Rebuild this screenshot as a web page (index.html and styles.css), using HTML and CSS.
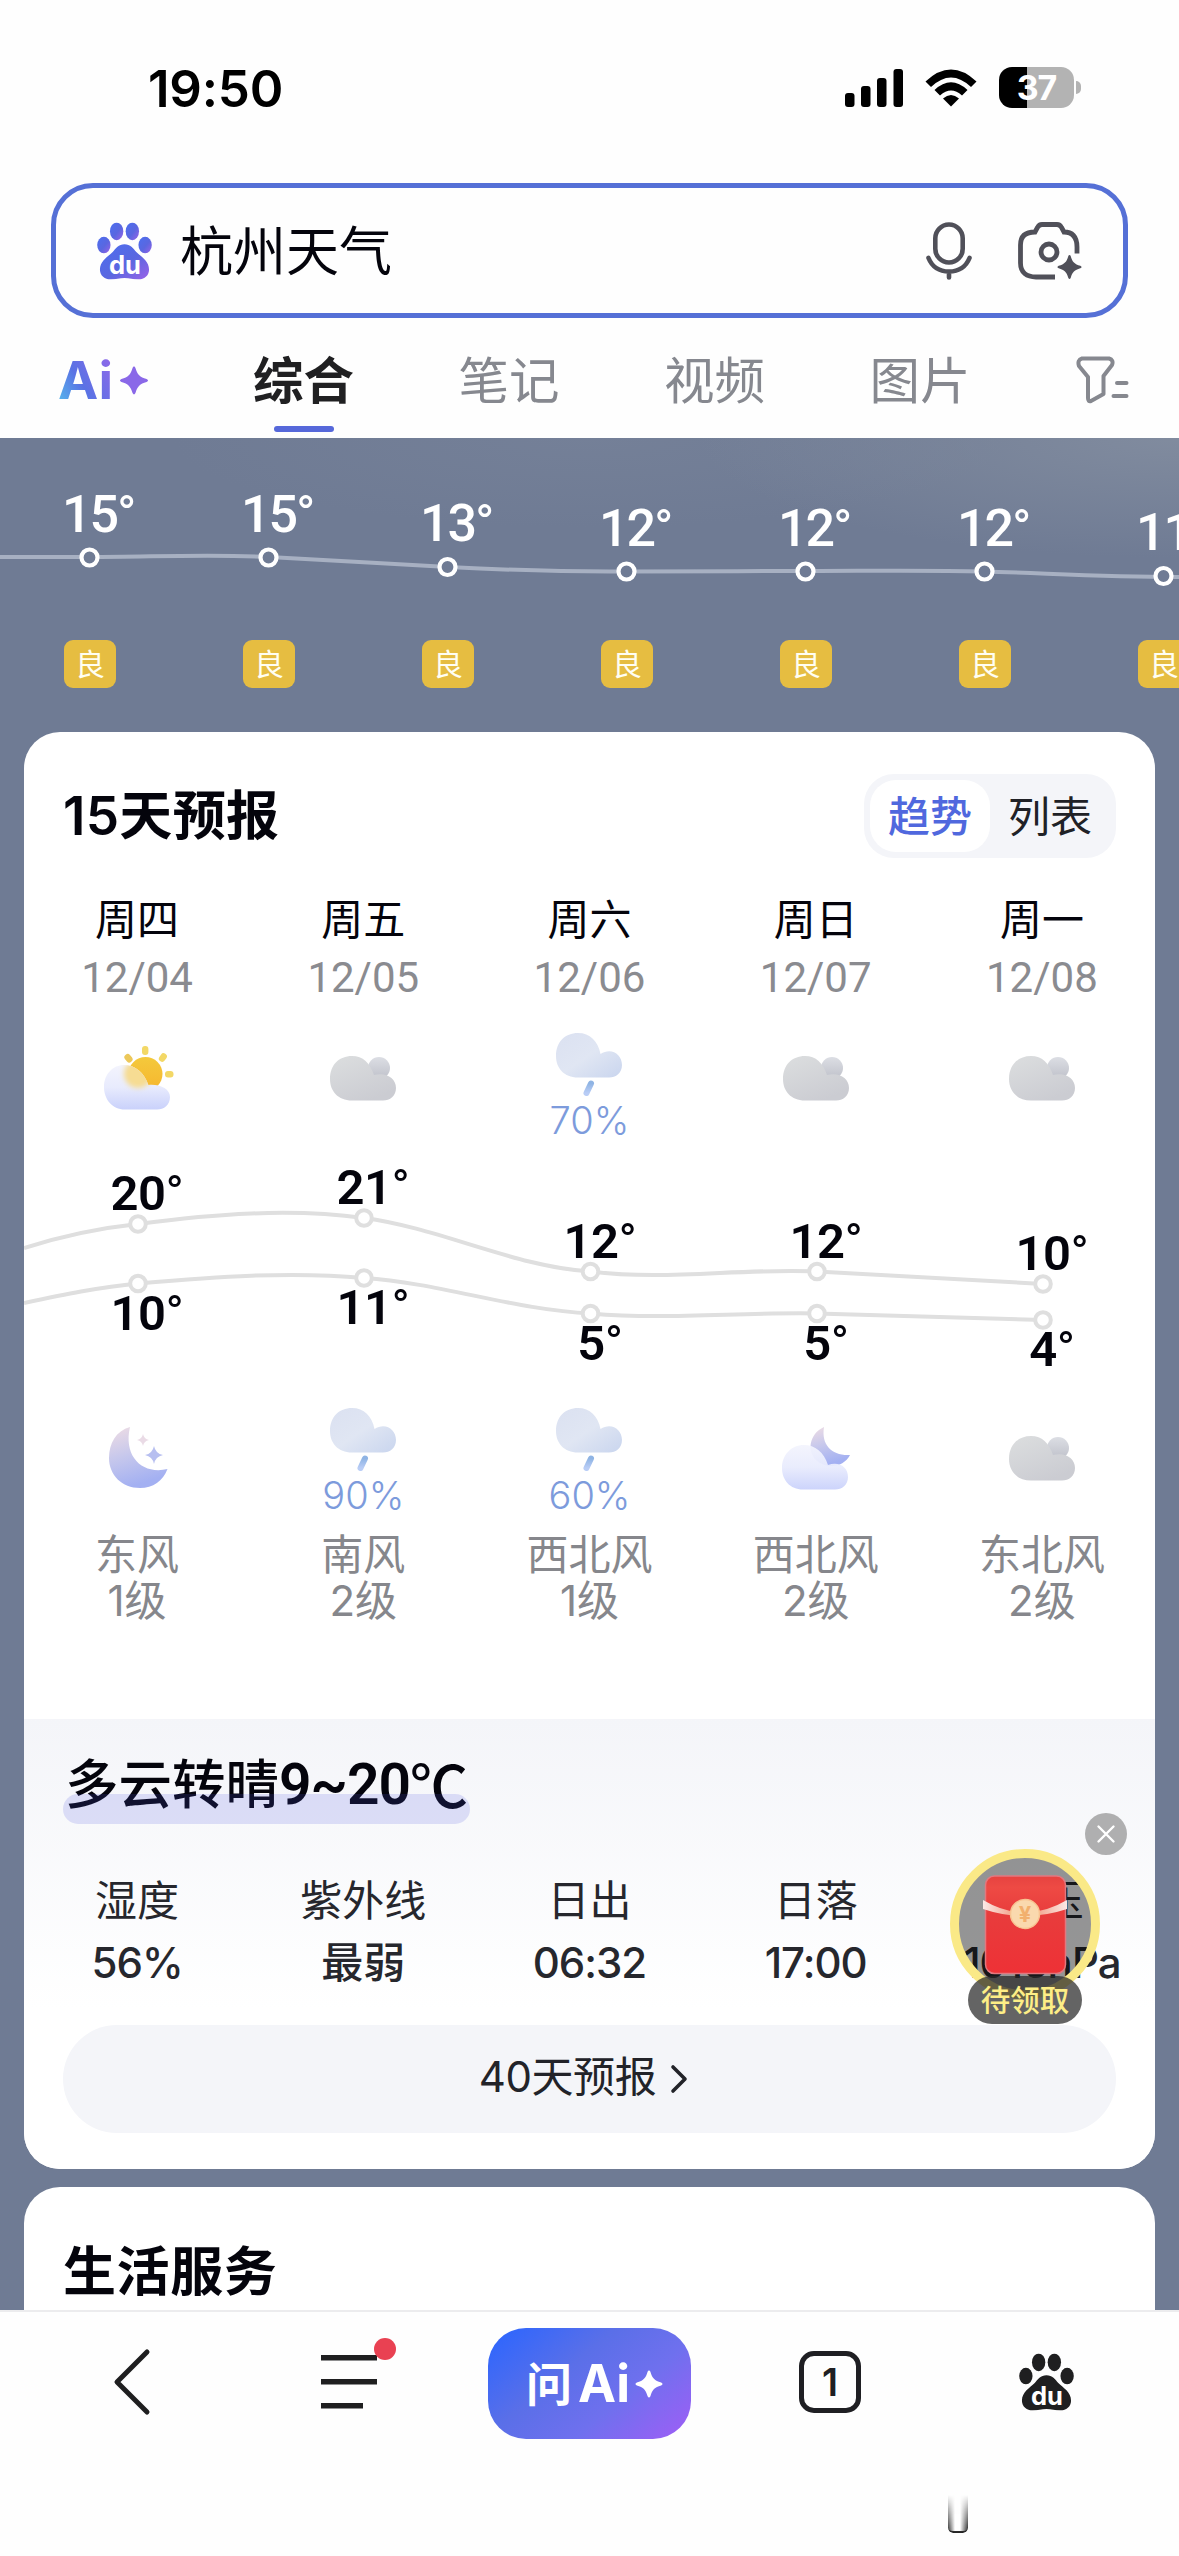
FILE: index.html
```html
<!DOCTYPE html>
<html lang="zh-CN">
<head>
<meta charset="utf-8">
<title>杭州天气</title>
<link rel="stylesheet" href="styles.css">
</head>
<body>
<svg class="defs" width="0" height="0" aria-hidden="true">
  <defs>
    <linearGradient id="pawGrad" x1="0" y1="0" x2="1" y2="1"><stop offset="0" stop-color="#4c6ff0"/><stop offset=".55" stop-color="#5a67e0"/><stop offset="1" stop-color="#9a62e8"/></linearGradient>
    <linearGradient id="greyCloud" x1="0" y1="0" x2=".6" y2="1"><stop offset="0" stop-color="#dcdedf"/><stop offset="1" stop-color="#cbccd2"/></linearGradient>
    <linearGradient id="greyBack" x1="0" y1="0" x2="0" y2="1"><stop offset="0" stop-color="#dcdee4"/><stop offset="1" stop-color="#bfc1ca"/></linearGradient>
    <linearGradient id="rainCloud" x1="0" y1="0" x2="1" y2="1"><stop offset="0" stop-color="#dbe1f1"/><stop offset=".5" stop-color="#e0e6f3"/><stop offset="1" stop-color="#c9d5ee"/></linearGradient>
    <linearGradient id="drop" x1="0" y1="0" x2="0" y2="1"><stop offset="0" stop-color="#8fb4e4"/><stop offset="1" stop-color="#b9cdf6"/></linearGradient>
    <linearGradient id="whiteCloud" x1="0" y1="0" x2="0" y2="1"><stop offset="0" stop-color="#f3f4fd"/><stop offset=".5" stop-color="#e8ebfd"/><stop offset="1" stop-color="#c9d1fb"/></linearGradient>
    <linearGradient id="sun" x1="0" y1="0" x2="0" y2="1"><stop offset="0" stop-color="#f4c93c"/><stop offset="1" stop-color="#f6b62f"/></linearGradient>
    <linearGradient id="moon" x1="0" y1="0" x2=".3" y2="1"><stop offset="0" stop-color="#efdde4"/><stop offset=".5" stop-color="#c7c8ec"/><stop offset="1" stop-color="#a3b0f2"/></linearGradient>
    <filter id="soft" x="-40%" y="-40%" width="180%" height="180%"><feGaussianBlur stdDeviation="2.5"/></filter>
    <clipPath id="cloudClip"><path d="M20 0C31 0 40 7 44.500 20C56 19 66 24 66 32C66 40 60 44.500 53 44.500H21C8 44.500 0 34 0 22C0 9 9 0 20 0Z"/></clipPath>

    <symbol id="paw" viewBox="0 0 56 58">
      <ellipse cx="20" cy="9" rx="6.8" ry="9"/><ellipse cx="36" cy="9" rx="6.8" ry="9"/>
      <ellipse cx="7" cy="23" rx="6.8" ry="8.4"/><ellipse cx="49" cy="23" rx="6.8" ry="8.4"/>
      <path d="M28 22C34 22 37 26 40 30C45 35 53 39 53 48C53 54 48 58 42 58C37 58 33 56.500 28 56.500S19 58 14 58C8 58 3 54 3 48C3 39 11 35 16 30C19 26 22 22 28 22Z"/>
    </symbol>
    <symbol id="overcast" viewBox="0 0 66 45">
      <circle cx="49" cy="12" r="11" fill="url(#greyBack)"/>
      <path d="M22 0C33 0 40 7 44 19C56 16 66 22 66 32C66 40 60 44.500 53 44.500H22C8 44.500 0 35 0 23C0 9 9 0 22 0Z" fill="url(#greyCloud)"/>
    </symbol>
    <symbol id="rain" viewBox="0 0 66 64">
      <path d="M22 0C34 0 42 8 44.500 21C55 14 66 21 66 32C66 40 60 44.500 53 44.500H22C8 44.500 0 35 0 23C0 9 9 0 22 0Z" fill="url(#rainCloud)"/>
      <path d="M35 50.500L30.500 60" stroke="url(#drop)" stroke-width="6" stroke-linecap="round"/>
    </symbol>
    <symbol id="partly" viewBox="0 0 70 64">
      <g fill="#f3d866">
        <rect x="38" y="0" width="6.400" height="9" rx="3"/>
        <rect x="21" y="8" width="6.400" height="9" rx="3" transform="rotate(-40 24 12)" fill="#ecc85a"/>
        <rect x="56" y="7" width="6.400" height="9" rx="3" transform="rotate(35 59 11)"/>
        <rect x="61" y="25" width="8.500" height="6.400" rx="3"/>
      </g>
      <circle cx="41.500" cy="28" r="17" fill="url(#sun)"/>
      <g transform="translate(0 19)">
        <path d="M20 0C31 0 40 7 44.500 20C56 19 66 24 66 32C66 40 60 44.500 53 44.500H21C8 44.500 0 34 0 22C0 9 9 0 20 0Z" fill="url(#whiteCloud)"/>
        <g clip-path="url(#cloudClip)"><circle cx="34" cy="9" r="14" fill="#f6dc93" filter="url(#soft)"/></g>
      </g>
    </symbol>
    <symbol id="crescent" viewBox="0 0 60 62">
      <path d="M21 0C7 4 0 16 0 31C0 48 13 61 31 61C44 61 54 54 58.500 42C34 48 14 30 21 0Z" fill="url(#moon)"/>
      <path d="M34 7Q35 12 40 13Q35 14 34 19Q33 14 28 13Q33 12 34 7Z" fill="#eadbe6"/>
      <path d="M45 19Q46.500 26.500 54 28Q46.500 29.500 45 37Q43.500 29.500 36 28Q43.500 26.500 45 19Z" fill="#b7bff0"/>
    </symbol>
    <symbol id="cloudyNight" viewBox="0 0 68 63">
      <path d="M42 0C27 7 25 24 34 33C45 43 62 40 68 28C50 29 39 18 42 0Z" fill="url(#moon)"/>
      <path d="M22 18C33 18 42 25 46 38C57 34 66 40 66 50C66 58 60 62.500 53 62.500H21C8 62.500 0 53 0 41C0 28 9 18 22 18Z" fill="url(#whiteCloud)" fill-opacity=".94"/>
    </symbol>
    <symbol id="sparkle" viewBox="0 0 30 30"><path d="M15 0.500Q16 0.500 16.500 2C18.500 9 21 11.500 28 13.500Q31 15 28 16.500C21 18.500 18.500 21 16.500 28Q15 31 13.500 28C11.500 21 9 18.500 2 16.500Q-1 15 2 13.500C9 11.500 11.500 9 13.500 2Q14 0.500 15 0.500Z"/></symbol>
  </defs>
</svg>

<div class="app">
  <header class="top">
    <div class="status">
      <span class="clock">19:50</span>
      <div class="status-icons">
        <svg width="58" height="38" viewBox="0 0 58 38"><rect y="24" width="9.500" height="14" rx="3"/><rect x="16" y="17" width="9.500" height="21" rx="3"/><rect x="32" y="9" width="9.500" height="29" rx="3"/><rect x="48.500" width="9.500" height="38" rx="3"/></svg>
        <svg class="wifi" width="52" height="38" viewBox="0 0 52 38"><path d="M0.500 12.500Q26-11.500 51.500 12.500L46 18Q26-1 6 18Z"/><path d="M9.500 21Q26 5.500 42.500 21L37 26.500Q26 16.500 15 26.500Z"/><path d="M18 29.500Q26 22.500 34 29.500L26 37.500Z"/></svg>
        <div class="battery"><span>37</span></div>
      </div>
    </div>

    <div class="search">
      <svg class="search-paw" width="55" height="58" viewBox="0 0 56 58"><use href="#paw" width="56" height="58" fill="url(#pawGrad)"/><text x="28.500" y="52" class="du">du</text></svg>
      <span class="query">杭州天气</span>
      <svg class="mic" width="46" height="58" viewBox="0 0 46 58" fill="none" stroke="#505059" stroke-width="4.600" stroke-linecap="round"><rect x="9.300" y="2.500" width="27.400" height="38" rx="13.700"/><path d="M2.500 36Q8 49.500 23 49.500T43.500 36M23 50V55.500"/></svg>
      <svg class="camera" width="64" height="58" viewBox="0 0 64 58" fill="none" stroke="#505059" stroke-width="4.800"><path d="M59 31.500V25C59 14 54 10 46 10L43.500 5.500Q42 2.500 39 2.500H24Q21 2.500 19.500 5.500L17 10C8 10 2.500 14 2.500 23V41C2.500 51 9 55 18 55H37"/><circle cx="31" cy="30" r="8"/><use href="#sparkle" x="39" y="32" width="25" height="26" fill="#505059" stroke="none"/></svg>
    </div>

    <nav class="tabs">
      <svg class="ai-tab" width="92" height="44" viewBox="0 0 92 44"><defs><linearGradient id="aiGrad" gradientUnits="userSpaceOnUse" x1="0" y1="42" x2="60" y2="4"><stop offset="0" stop-color="#57b5ec"/><stop offset=".4" stop-color="#5a72e4"/><stop offset="1" stop-color="#9467ea"/></linearGradient></defs><text x="0" y="41" class="ai-text" textLength="55" lengthAdjust="spacingAndGlyphs" fill="url(#aiGrad)">Ai</text><use href="#sparkle" x="61" y="8" width="30" height="29" fill="#8a68e8"/></svg>
      <a class="tab tab--on">综合</a>
      <a class="tab">笔记</a>
      <a class="tab">视频</a>
      <a class="tab">图片</a>
      <svg class="filter" width="54" height="48" viewBox="0 0 54 48" fill="none" stroke="#86888f" stroke-width="4" stroke-linejoin="round" stroke-linecap="round"><path d="M6 2.500H33Q38 4 36 9L27.500 20V38L15 45Q12 46 12 42V21L3 10Q1 4 6 2.500Z"/><path d="M41 27H50.500M37.500 40H50.500"/></svg>
    </nav>
  </header>

  <main class="feed">
    <section class="hourly">
      <svg class="hourly-chart" width="1179" height="202" viewBox="0 438 1179 202">
        <path d="M0 557H90C150 557 210 554 269 557C330 560 388 564 448 567C508 570 567 572 627 571.500C690 571.500 745 571 805 571C865 571 925 570 984 571.500C1044 573 1100 577 1179 577" fill="none" stroke="#a7b0c2" stroke-width="4"/>
        <g class="dots">
          <circle cx="89.500" cy="557.500" r="8"/><circle cx="268.500" cy="557.500" r="8"/><circle cx="447.500" cy="567" r="8"/><circle cx="626.500" cy="571.500" r="8"/><circle cx="805.500" cy="571.500" r="8"/><circle cx="984.500" cy="571.500" r="8"/><circle cx="1163.500" cy="576" r="8"/>
        </g>
        <g class="hour-temps">
          <text x="62" y="532">15<tspan>°</tspan></text><text x="241" y="532">15<tspan>°</tspan></text><text x="420" y="541">13<tspan>°</tspan></text><text x="599" y="546">12<tspan>°</tspan></text><text x="778" y="546">12<tspan>°</tspan></text><text x="957" y="546">12<tspan>°</tspan></text><text x="1136" y="550">11<tspan>°</tspan></text>
        </g>
      </svg>
      <div class="air"><span>良</span><span>良</span><span>良</span><span>良</span><span>良</span><span>良</span><span>良</span></div>
    </section>

    <section class="card forecast">
      <div class="card-head">
        <h2>15天预报</h2>
        <div class="switch"><span class="on">趋势</span><span>列表</span></div>
      </div>
      <div class="days">
        <div class="day"><b>周四</b><time>12/04</time><div class="sky"><svg class="nudge" width="70" height="64"><use href="#partly"/></svg></div></div>
        <div class="day"><b>周五</b><time>12/05</time><div class="sky"><svg width="66" height="45"><use href="#overcast"/></svg></div></div>
        <div class="day"><b>周六</b><time>12/06</time><div class="sky sky--rain"><svg width="66" height="64"><use href="#rain"/></svg><em>70%</em></div></div>
        <div class="day"><b>周日</b><time>12/07</time><div class="sky"><svg width="66" height="45"><use href="#overcast"/></svg></div></div>
        <div class="day"><b>周一</b><time>12/08</time><div class="sky"><svg width="66" height="45"><use href="#overcast"/></svg></div></div>
      </div>
      <svg class="trend" width="1131" height="240" viewBox="24 1148 1131 240">
        <g fill="none" stroke="#dfdfdf" stroke-width="4">
          <path d="M24 1248C62 1236 100 1228 138 1224C213 1214 290 1208 364 1218C440 1228 515 1267 590.500 1271.500C665 1281 740 1268 817 1271.500L1043 1284"/>
          <path d="M24 1303C62 1295 100 1287 138 1283.500C213 1277 290 1271 364 1278C440 1283 515 1310 590.500 1313.500C665 1320 740 1312 817 1313.500L1043 1320"/>
          <g fill="#fff">
            <circle cx="138" cy="1224" r="7.800"/><circle cx="364" cy="1218" r="7.800"/><circle cx="590.500" cy="1271.500" r="7.800"/><circle cx="817" cy="1271.500" r="7.800"/><circle cx="1043" cy="1284" r="7.800"/>
            <circle cx="138" cy="1283.500" r="7.800"/><circle cx="364" cy="1278" r="7.800"/><circle cx="590.500" cy="1313.500" r="7.800"/><circle cx="817" cy="1313.500" r="7.800"/><circle cx="1043" cy="1320" r="7.800"/>
          </g>
        </g>
        <g class="temps">
          <text x="147" y="1210">20<tspan>°</tspan></text><text x="373" y="1204">21<tspan>°</tspan></text><text x="600" y="1258">12<tspan>°</tspan></text><text x="826" y="1258">12<tspan>°</tspan></text><text x="1052" y="1270">10<tspan>°</tspan></text>
          <text x="147" y="1330">10<tspan>°</tspan></text><text x="373" y="1324">11<tspan>°</tspan></text><text x="600" y="1360">5<tspan>°</tspan></text><text x="826" y="1360">5<tspan>°</tspan></text><text x="1052" y="1366">4<tspan>°</tspan></text>
        </g>
      </svg>
      <div class="days">
        <div class="day"><div class="sky"><svg class="nudge" width="60" height="62"><use href="#crescent"/></svg></div><p>东风<br>1级</p></div>
        <div class="day"><div class="sky sky--rain-night"><svg width="66" height="64"><use href="#rain"/></svg><em>90%</em></div><p>南风<br>2级</p></div>
        <div class="day"><div class="sky sky--rain-night"><svg width="66" height="64"><use href="#rain"/></svg><em>60%</em></div><p>西北风<br>1级</p></div>
        <div class="day"><div class="sky"><svg width="68" height="63"><use href="#cloudyNight"/></svg></div><p>西北风<br>2级</p></div>
        <div class="day"><div class="sky"><svg width="66" height="45"><use href="#overcast"/></svg></div><p>东北风<br>2级</p></div>
      </div>
      <div class="detail">
        <h3>多云转晴<span class="range">9~20</span><span class="unit">℃</span></h3>
        <dl class="metrics">
          <div><dt>湿度</dt><dd>56%</dd></div>
          <div><dt>紫外线</dt><dd class="strong">最弱</dd></div>
          <div><dt>日出</dt><dd>06:32</dd></div>
          <div><dt>日落</dt><dd>17:00</dd></div>
          <div><dt>气压</dt><dd>1016hPa</dd></div>
        </dl>
        <a class="more"><span>40天预报</span><svg width="18" height="30" viewBox="0 0 18 30" fill="none" stroke="#222329" stroke-width="3.600" stroke-linecap="round" stroke-linejoin="round"><path d="M3 3L15 15L3 27"/></svg></a>
      </div>
    </section>

    <section class="card life"><h2>生活服务</h2></section>

    <svg class="reward-close" width="42" height="42" viewBox="0 0 42 42"><circle cx="21" cy="21" r="21" fill="#afafb0"/><path d="M13.500 13.500L28.500 28.500M28.500 13.500L13.500 28.500" stroke="#fff" stroke-width="2.400" stroke-linecap="round"/></svg>
    <div class="reward">
      <svg width="150" height="150" viewBox="0 0 150 150">
        <defs>
          <linearGradient id="env" x1="0" y1="0" x2="0" y2="1"><stop offset="0" stop-color="#e64340"/><stop offset=".12" stop-color="#ee4a44"/><stop offset=".4" stop-color="#e83c3c"/><stop offset="1" stop-color="#ee3136"/></linearGradient>
          <linearGradient id="band" x1="0" y1="0" x2="1" y2="0"><stop offset="0" stop-color="#fbe9e6"/><stop offset=".35" stop-color="#f3a58f"/><stop offset=".65" stop-color="#f3a58f"/><stop offset="1" stop-color="#fbe9e6"/></linearGradient>
        </defs>
        <circle cx="75" cy="75" r="70.500" fill="#000" fill-opacity=".41"/>
        <circle cx="75" cy="75" r="70.500" fill="none" stroke="#fae987" stroke-width="9"/>
        <rect x="35.500" y="27" width="80" height="97.500" rx="9" fill="url(#env)" stroke="#e2787f" stroke-width="1.500"/>
        <path d="M33 51Q75 76 117 51V60Q75 74 33 60Z" fill="url(#band)"/>
        <circle cx="75" cy="65" r="14.500" fill="#fad9ae" stroke="#f8c492" stroke-width="1.500"/>
        <text x="75" y="73" class="yen">¥</text>
      </svg>
      <span class="reward-label">待领取</span>
    </div>
  </main>

  <footer class="toolbar">
    <a class="tool"><svg width="40" height="68" viewBox="0 0 40 68" fill="none" stroke="#1f1f20" stroke-width="5" stroke-linecap="round" stroke-linejoin="round"><path d="M34 4L4 34L34 64"/></svg></a>
    <a class="tool tool--menu"><svg width="58" height="56" viewBox="0 0 58 56" fill="#1f1f20"><rect y="1" width="56" height="5.500"/><rect y="25" width="56" height="5.500"/><rect y="49" width="42" height="5.500"/></svg><i></i></a>
    <a class="ask"><span>问</span><svg width="86" height="48" viewBox="0 0 86 48" fill="#fff"><text x="0" y="42" class="ai-text" textLength="52" lengthAdjust="spacingAndGlyphs">Ai</text><use href="#sparkle" x="57" y="10" width="28" height="28"/></svg></a>
    <a class="tool"><span class="windows">1</span></a>
    <a class="tool tool--home"><svg width="55" height="58" viewBox="0 0 56 58"><use href="#paw" width="56" height="58" fill="#1f1f20"/><text x="28.500" y="52" class="du">du</text></svg></a>
    <div class="smudge"></div>
  </footer>
</div>
</body>
</html>
```
FILE: styles.css
```css
* { box-sizing: border-box; margin: 0; padding: 0; }
body {
  width: 1179px;
  height: 2556px;
  overflow: hidden;
  background: #fefefe;
  color: #04040c;
  font-family: Inter, "Noto Sans CJK SC", sans-serif;
}
svg { display: block; flex: none; }
.defs { position: absolute; }
em, i { font-style: normal; }
.app { display: flex; flex-direction: column; height: 2556px; }

/* Header */
.top { height: 438px; flex: none; background: #fefefe; }
.status {
  display: flex;
  justify-content: space-between;
  align-items: center;
  height: 183px;
  padding: 0 105px 8px 148px;
}
.clock { padding-top: 2px; font-size: 51px; font-weight: 600; letter-spacing: -0.2px; color: #000; }
.status-icons { display: flex; align-items: center; gap: 22px; }
.battery {
  position: relative;
  width: 75px;
  height: 41px;
  border-radius: 13px;
  background: linear-gradient(90deg, #000 28px, #b3b3b3 28px);
  text-align: center;
}
.battery span { font-size: 34px; line-height: 41px; font-weight: 700; color: #fff; letter-spacing: -1px; }
.battery::after {
  content: "";
  position: absolute;
  left: 77px;
  top: 14px;
  width: 5px;
  height: 13px;
  border-radius: 0 5px 5px 0;
  background: #b3b3b3;
}
.search {
  display: flex;
  align-items: center;
  width: 1077px;
  height: 135px;
  margin-left: 51px;
  padding: 0 41px;
  border: 5px solid #5570d6;
  border-radius: 42px;
}
.query { flex: 1; margin-left: 28px; padding-top: 3px; font-size: 53px; line-height: 60px; }
.mic { margin-right: 46px; }
.du { font: 700 26px Inter, sans-serif; fill: #fff; text-anchor: middle; }
.tabs {
  display: flex;
  align-items: center;
  height: 120px;
  padding: 4px 49px 0 58px;
}
.ai-tab { overflow: visible; }
.ai-text { font: 700 52px Inter, sans-serif; }
.tab {
  position: relative;
  width: 100px;
  margin-left: 105.500px;
  padding-top: 2px;
  font-size: 50.500px;
  line-height: 60px;
  white-space: nowrap;
  color: #86888f;
}
.ai-tab + .tab { margin-left: 103px; }
.tab--on { font-weight: 700; color: #202022; }
.tab--on::after {
  content: "";
  position: absolute;
  left: 21px;
  bottom: -21px;
  width: 60px;
  height: 6px;
  border-radius: 3px;
  background: #5668da;
}
.filter { margin-left: auto; }

/* Scrolling content */
.feed {
  position: relative;
  height: 1872px;
  flex: none;
  overflow: hidden;
  background:
    radial-gradient(ellipse 480px 120px at 100% 0, rgba(138, 148, 164, .65), rgba(138, 148, 164, 0)),
    radial-gradient(ellipse 420px 90px at 50% 0, rgba(128, 139, 160, .3), rgba(128, 139, 160, 0)),
    #6f7b94;
}
.hourly { height: 294px; }
.dots { fill: #6f7b94; stroke: #fff; stroke-width: 4.200; }
.hour-temps, .temps { font-family: Roboto, sans-serif; }
.hour-temps { font-size: 52px; font-weight: 500; letter-spacing: -2px; fill: #fff; }
.temps { font-size: 49px; font-weight: 600; letter-spacing: -.5px; text-anchor: middle; fill: #04040c; }
.hour-temps tspan, .temps tspan { font-weight: 400; }
.air { display: flex; gap: 127px; padding-left: 64px; }
.air span {
  flex: none;
  width: 52px;
  height: 48px;
  border-radius: 9px;
  background: #e6bd41;
  color: #fffef2;
  font-size: 30px;
  line-height: 48px;
  text-align: center;
}
.card { width: 1131px; margin: 0 auto 18px; border-radius: 36px; background: #fff; }
.forecast { height: 1437px; padding-top: 42px; overflow: hidden; }
.card-head { display: flex; justify-content: space-between; align-items: center; height: 84px; padding: 0 39px; }
h2 { font-size: 53px; line-height: 80px; font-weight: 600; letter-spacing: .3px; }
.switch {
  display: flex;
  width: 252px;
  height: 84px;
  padding: 6px;
  border-radius: 30px;
  background: #f4f5f9;
  font-size: 42px;
  line-height: 74px;
  color: #202126;
  text-align: center;
}
.switch span { width: 120px; height: 72px; }
.switch .on { border-radius: 26px; background: #fff; color: #5068de; font-weight: 500; }
.days { display: grid; grid-template-columns: repeat(5, 1fr); }
.forecast .card-head + .days { margin-top: 30px; }
.day { display: flex; flex-direction: column; align-items: center; }
.day b, .day time { font-size: 42px; line-height: 60px; font-weight: 400; }
.day b { height: 60px; line-height: 63px; }
.day time { font-family: Roboto, sans-serif; color: #8a8b90; }
.sky { display: flex; flex-direction: column; align-items: center; justify-content: center; height: 140px; }
.sky--rain { padding-top: 20px; }
.sky--rain-night { padding-top: 10px; }
.sky em { font-size: 38px; line-height: 46px; font-weight: 350; color: #7d9bdc; }
.nudge { margin-left: 3px; }
.day p { margin-top: 4px; height: 91px; font-size: 42px; line-height: 46px; text-align: center; color: #86878c; }

.detail { margin-top: 96px; padding: 28px 39px 36px; background: linear-gradient(#f4f5f9, #fff 290px); }
h3 {
  position: relative;
  display: flex;
  width: 407px;
  height: 76px;
  padding-left: 2px;
  font-size: 53.500px;
  line-height: 76px;
  font-weight: 500;
  white-space: nowrap;
}
h3::after {
  content: "";
  position: absolute;
  left: 0;
  right: 0;
  bottom: -1px;
  height: 30px;
  border-radius: 15px;
  background: rgba(75, 85, 225, .17);
}
.range { width: 128px; font-family: Roboto, sans-serif; font-size: 57px; font-weight: 600; letter-spacing: -1px; }
.unit { font-family: "Noto Sans CJK SC", sans-serif; font-size: 58px; font-weight: 500; line-height: 72px; margin-left: 3px; }
.metrics { display: grid; grid-template-columns: repeat(5, 226.200px); margin: 48px -39px 0; }
.metrics div { text-align: center; font-size: 42px; line-height: 60px; color: #26272d; }
.metrics dd { margin-top: 2px; font-weight: 500; letter-spacing: -1px; }
.metrics .strong { letter-spacing: 0; }
.more {
  display: flex;
  align-items: center;
  justify-content: center;
  gap: 14px;
  height: 108px;
  margin-top: 32px;
  padding-right: 12px;
  border-radius: 54px;
  background: #f4f5f9;
  font-size: 42px;
  line-height: 60px;
  color: #222329;
}
.more span { margin-top: -5px; letter-spacing: -.4px; }
.life { height: 300px; padding: 45px 39px; }
.life h2 { font-weight: 700; letter-spacing: .6px; }

/* Floating reward */
.reward-close { position: absolute; left: 1085px; top: 1375px; }
.reward { position: absolute; left: 950px; top: 1411px; width: 150px; }
.reward-label {
  position: absolute;
  left: 18px;
  top: 127px;
  width: 114px;
  height: 48px;
  border-radius: 24px;
  background: rgba(40, 40, 40, .72);
  color: #fdee86;
  font-size: 29.500px;
  line-height: 48px;
  font-weight: 500;
  text-align: center;
}
.yen { font: 700 22px Inter, sans-serif; fill: #f2b06e; text-anchor: middle; }

/* Bottom toolbar */
.toolbar {
  position: relative;
  display: flex;
  align-items: flex-start;
  height: 246px;
  padding: 17px 105px 0 113px;
  border-top: 2px solid #ececee;
  background: #fefefe;
}
.tool { display: flex; align-items: center; justify-content: center; height: 106px; }
.tool--menu { position: relative; margin-left: 168px; margin-right: 109px; }
.tool--menu i { position: absolute; left: 53px; top: 9px; width: 22px; height: 22px; border-radius: 50%; background: #e94152; }
.ask {
  display: flex;
  align-items: center;
  width: 203px;
  height: 111px;
  margin: -1px 108px 0 0;
  padding-left: 38px;
  gap: 6px;
  border-radius: 38px;
  background: linear-gradient(140deg, #3367fb 8%, #5a6fe8 38%, #6f70ee 65%, #9960f5 95%);
  color: #fff;
  font-size: 46px;
  line-height: 60px;
  font-weight: 700;
}
.windows {
  width: 62px;
  height: 62px;
  border: 5.500px solid #1f1f23;
  border-radius: 15px;
  font-size: 38px;
  line-height: 52px;
  font-weight: 600;
  text-align: center;
  color: #1f1f23;
}
.tool--home { margin-left: 158px; }
.smudge {
  position: absolute;
  left: 948px;
  top: 183px;
  width: 20px;
  height: 38px;
  border-radius: 0 0 5px 5px;
  border-bottom: 2px solid #222;
  background: linear-gradient(90deg, rgba(0,0,0,.85), #fff 35%, #fff 60%, rgba(0,0,0,.9));
  -webkit-mask-image: linear-gradient(transparent, #000);
  mask-image: linear-gradient(transparent, #000);
}
```
